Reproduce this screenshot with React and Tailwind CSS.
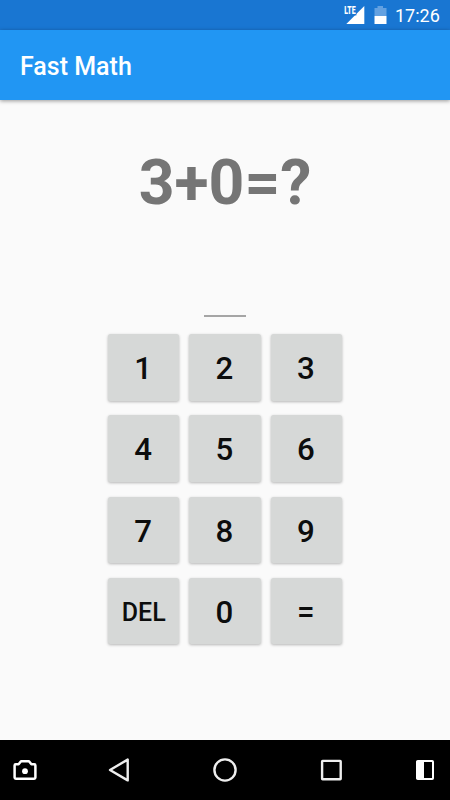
import React, { useState } from 'react';

const KEYS = ['1', '2', '3', '4', '5', '6', '7', '8', '9', 'DEL', '0', '='];

function StatusBar() {
    return (
        <div className="h-[30px] bg-[#1976d2] flex items-center justify-end pr-[10px] text-white">
            <svg className="w-[21px] h-[20px]" viewBox="0 0 21 20">
                <path d="M20.3 1V19H2.3Z" fill="#fff" />
                <rect x="0" y="0" width="12.4" height="10.4" fill="#1976d2" />
                <text
                    x="0.2"
                    y="9"
                    fontSize="11"
                    fontWeight="900"
                    textLength="11.4"
                    lengthAdjust="spacingAndGlyphs"
                    fill="#fff"
                    fontFamily="Roboto, sans-serif"
                >
                    LTE
                </text>
            </svg>
            <svg className="w-[13px] h-[18px] ml-[9px]" viewBox="0 0 13 18">
                <path d="M3.5 0H9V2H12.5V10H0.5V2H3.5Z" fill="#63a1e1" />
                <path d="M0.5 10H12.5V18H0.5Z" fill="#fff" />
            </svg>
            <span className="ml-[8px] text-[18px] leading-none w-[45px] whitespace-nowrap pt-px">17:26</span>
        </div>
    );
}

function NavBar() {
    return (
        <div className="h-[60px] bg-black">
            <svg className="w-[450px] h-[60px]" viewBox="0 0 450 60" fill="none" stroke="#eee" strokeWidth="2.4" strokeLinejoin="round">
                <path d="M15.7 24.3H18.6L21 21.2H29L31.4 24.3H34.3Q35.4 24.3 35.4 25.4V37.6Q35.4 38.8 34.2 38.8H15.8Q14.6 38.8 14.6 37.6V25.4Q14.6 24.3 15.7 24.3Z" stroke="#fff" strokeWidth="2.5" />
                <circle cx="25" cy="31.2" r="2.9" fill="#fff" stroke="none" />
                <path d="M127.7 19.6V40.4L110 30Z" />
                <circle cx="225" cy="30" r="10.6" />
                <rect x="322.1" y="20.9" width="18.6" height="18.4" rx="0.5" />
                <rect x="417" y="21" width="16" height="18" rx="0.8" stroke="#fff" strokeWidth="2" />
                <path d="M416.5 21H424V39H416.5Z" fill="#fff" stroke="none" />
            </svg>
        </div>
    );
}

export default function App() {
    const [answer, setAnswer] = useState('');

    const handleKey = (key) => {
        if (key === 'DEL') {
            setAnswer(answer.slice(0, -1));
        } else if (key !== '=') {
            setAnswer(answer + key);
        }
    };

    return (
        <div className="w-[450px] h-[800px] flex flex-col bg-[#fafafa] font-['Roboto',sans-serif] overflow-hidden">
            <StatusBar />
            <header className="h-[70px] bg-[#2196f3] flex items-center pl-5 shadow-[0_1px_4px_rgba(0,0,0,0.4)]">
                <h1 className="text-[25px] leading-none font-medium text-white pt-[2px]">Fast Math</h1>
            </header>

            <main className="flex-1 flex flex-col items-center">
                <div className="mt-[46px] h-[74px] text-[62.5px] leading-[74px] font-bold text-[#757575]">3+0=?</div>

                {/* Answer field */}
                <div className="mt-[55px] h-[42px] min-w-[42px] border-b-2 border-[#a5a5a5] text-center text-[28px] text-black">
                    {answer}
                </div>

                <div className="mt-[17px] grid grid-cols-3 gap-x-[9.8px] gap-y-[14.8px]">
                    {KEYS.map((key) => (
                        <button
                            key={key}
                            onClick={() => handleKey(key)}
                            className={`w-[71.5px] h-[66.5px] rounded-[2.5px] bg-[#d6d8d7] text-[#0c0d0d] font-medium leading-none shadow-[0_1px_3px_rgba(0,0,0,0.28)] ${key === 'DEL' ? 'text-[25px] pt-[2px]' : 'text-[31.25px] pr-px pt-[3px]'}`}
                        >
                            {key}
                        </button>
                    ))}
                </div>
            </main>

            <NavBar />
        </div>
    );
}
